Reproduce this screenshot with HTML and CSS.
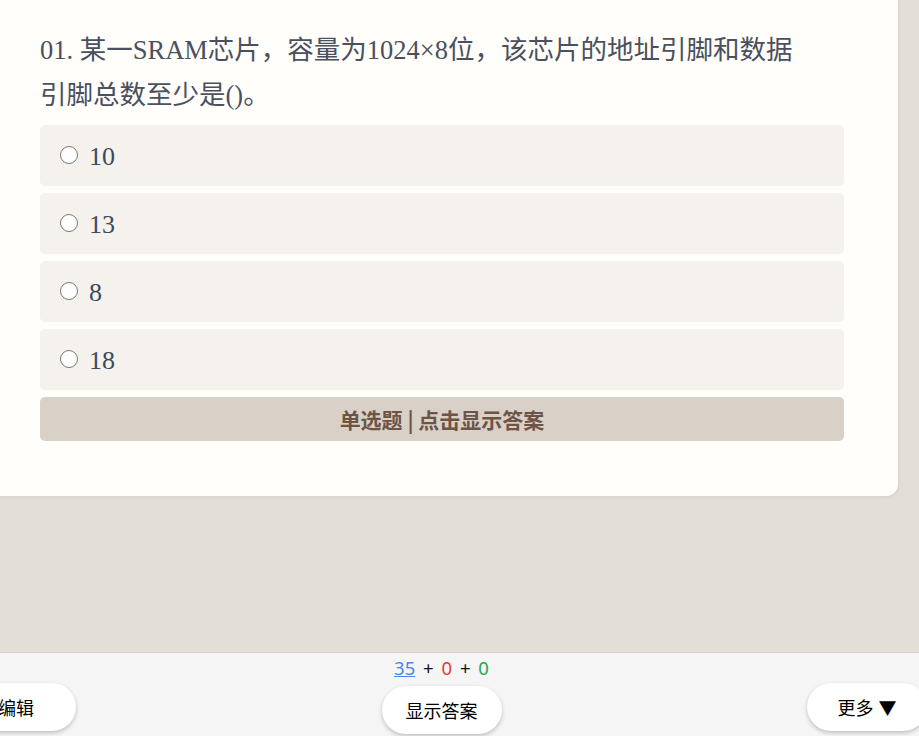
FILE: index.html
```html
<!DOCTYPE html>
<html lang="zh-CN">
<head>
<meta charset="utf-8">
<title>题目</title>
<link rel="stylesheet" href="styles.css">
</head>
<body>
<main class="card">
  <div class="question">01. 某一SRAM芯片，容量为1024×8位，该芯片的地址引脚和数据<br>引脚总数至少是()。</div>
  <div class="options">
    <label class="option"><input type="radio" name="q1" class="radio"><span>10</span></label>
    <label class="option"><input type="radio" name="q1" class="radio"><span>13</span></label>
    <label class="option"><input type="radio" name="q1" class="radio"><span>8</span></label>
    <label class="option"><input type="radio" name="q1" class="radio"><span>18</span></label>
    <div class="reveal">单选题 | 点击显示答案</div>
  </div>
</main>
<footer class="bar">
  <div class="bar-row">
    <button class="pill side">编辑</button>
    <div class="center">
      <div class="counter"><a class="c-blue">35</a> + <span class="c-red">0</span> + <span class="c-green">0</span></div>
      <button class="pill">显示答案</button>
    </div>
    <button class="pill side">更多<span class="caret">▼</span></button>
  </div>
</footer>
</body>
</html>
```
FILE: styles.css
```css
html, body {
  margin: 0;
  padding: 0;
  overflow: hidden;
}
body {
  height: 736px;
  display: flex;
  flex-direction: column;
  background: #e3dfd8;
}
.card {
  box-sizing: border-box;
  width: 912px;
  margin: -20px 0 0 -14px;
  padding: 47.5px 54px 55px;
  background: #fffefb;
  border-radius: 12px;
  box-shadow: 0 1px 4px rgba(0, 0, 0, 0.08);
}
.question {
  font-family: "Liberation Serif", "Noto Sans CJK SC", serif;
  font-size: 26.5px;
  line-height: 45px;
  color: #4a505d;
  margin-bottom: 7.5px;
  white-space: nowrap;
}
.options {
  display: flex;
  flex-direction: column;
  gap: 7px;
}
.option {
  display: flex;
  align-items: center;
  height: 61px;
  padding: 0 20px;
  background: #f5f2ed;
  border-radius: 5px;
  font-family: "Liberation Serif", "Noto Sans CJK SC", serif;
  font-size: 26px;
  color: #3b4a5f;
}
.radio {
  appearance: none;
  -webkit-appearance: none;
  box-sizing: border-box;
  flex: none;
  width: 18px;
  height: 18px;
  margin: 0 11px 2px 0;
  border: 1.5px solid #777;
  border-radius: 50%;
  background: #fff;
}
.option span {
  padding-top: 3px;
}
.reveal {
  height: 44px;
  line-height: 44px;
  text-align: center;
  background: #d9d0c7;
  border-radius: 5px;
  font-family: "Noto Sans CJK SC", sans-serif;
  font-weight: 700;
  font-size: 21px;
  color: #6c5447;
}
.bar {
  margin-top: auto;
  height: 83px;
  background: #f5f5f5;
  border-top: 1px solid #d2d2d2;
}
.bar-row {
  display: flex;
  justify-content: space-between;
  align-items: flex-start;
  margin: 0 -8px 0 -44px;
}
.center {
  display: flex;
  flex-direction: column;
  align-items: center;
}
.counter {
  padding-top: 4px;
  height: 22px;
  line-height: 22px;
  margin-bottom: 7px;
  font-family: "Noto Sans", "Noto Sans CJK SC", sans-serif;
  font-size: 18.5px;
  word-spacing: 3px;
  color: #111;
}
.c-blue {
  color: #4a86e8;
  text-decoration: underline;
}
.c-red {
  color: #e53935;
}
.c-green {
  color: #2aa44f;
}
.pill {
  width: 120px;
  height: 48px;
  border: none;
  border-radius: 24px;
  background: #fff;
  box-shadow: 0 2px 4px rgba(0, 0, 0, 0.22);
  font-family: "Noto Sans CJK SC", sans-serif;
  font-size: 18px;
  color: #000;
  padding: 0;
}
.caret {
  margin-left: 5px;
}
.side {
  margin-top: 30px;
}
```
